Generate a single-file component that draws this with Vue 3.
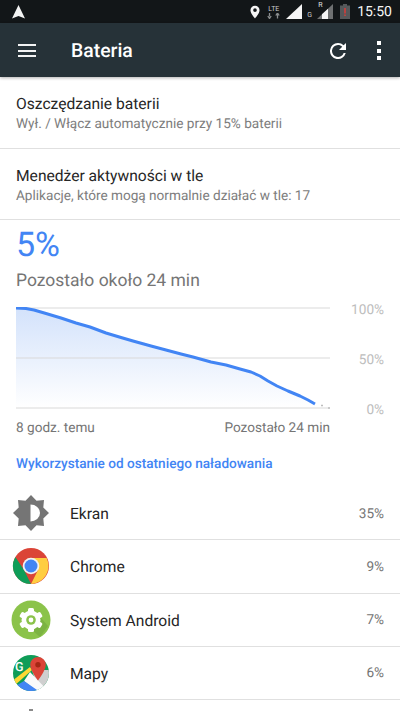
<script setup>
const usage = [
  { name: 'Ekran', pct: '35%', icon: 'screen' },
  { name: 'Chrome', pct: '9%', icon: 'chrome' },
  { name: 'System Android', pct: '7%', icon: 'android' },
  { name: 'Mapy', pct: '6%', icon: 'maps' }
];

// battery curve, read off the reference (x, y inside a 314x100 plot)
const curve = [
  [0, 0], [10, 0.5], [18, 2], [30, 5.5], [45, 10], [60, 15], [74, 19], [90, 25], [105, 29.5],
  [117, 33], [135, 38], [150, 42], [165, 46], [177, 49], [195, 54], [210, 57], [224, 61],
  [235, 64], [244, 68], [252, 73], [261, 78], [272, 83], [284, 88], [292, 92], [299, 96]
];
const linePts = curve.map(p => p.join(',')).join(' ');
const areaPts = `0,100 ${linePts} 303,100`;
</script>

<template>
  <div class="phone">
    <div class="status">
      <svg class="nav" width="13" height="14" viewBox="0 0 13 14"><path d="M6.500 0 13 13.500 6.500 11 0 13.500Z" fill="#f2f3f3"/></svg>
      <div class="status-right">
        <svg width="10" height="14" viewBox="0 0 11 14"><path d="M5.500 0a5 5 0 0 0-5 5c0 3.600 5 9 5 9s5-5.400 5-9a5 5 0 0 0-5-5Zm0 7a2 2 0 1 1 0-4 2 2 0 0 1 0 4Z" fill="#f5f5f5"/></svg>
        <div class="lte">
          <span>LTE</span>
          <svg width="14" height="6" viewBox="0 0 14 6"><path d="M2.500 0v3.500M0.800 3 2.500 5.500 4.200 3M10.500 5.500V2M8.800 2.500 10.500 0 12.200 2.500" fill="none" stroke="#8a8d8e" stroke-width="1.300"/></svg>
        </div>
        <svg class="sig" width="16" height="15" viewBox="0 0 16 15"><path d="M0 15 16 0V15Z" fill="#f5f5f5"/></svg>
        <span class="g">G</span>
        <div class="roam">
          <span>R</span>
          <svg width="16" height="15" viewBox="0 0 16 15"><path d="M0 15 16 0V15Z" fill="#6f7172"/><path d="M5 10.300 11 4.700V15H5Z" fill="#f5f5f5"/></svg>
        </div>
        <svg class="batt" width="10" height="15" viewBox="0 0 10 15"><path d="M3 0h4v1.500h3V15H0V1.500h3Z" fill="#55585a"/><path d="M4.300 4h1.400v5.500H4.300ZM4.300 10.500h1.400V12H4.300Z" fill="#e53935"/></svg>
        <span class="clock">15:50</span>
      </div>
    </div>

    <header class="toolbar">
      <div class="burger"><i></i><i></i><i></i></div>
      <h1>Bateria</h1>
      <svg class="refresh" width="16" height="16" viewBox="4 4 16 16"><path d="M17.650 6.350A7.958 7.958 0 0 0 12 4a8 8 0 1 0 7.730 10h-2.080A6 6 0 1 1 12 6c1.660 0 3.140.69 4.220 1.780L13 11h7V4l-2.350 2.350Z" fill="#fff"/></svg>
      <div class="dots"><i></i><i></i><i></i></div>
    </header>

    <section class="setting">
      <div class="title">Oszczędzanie baterii</div>
      <div class="sub">Wył. / Włącz automatycznie przy 15% baterii</div>
    </section>
    <section class="setting second">
      <div class="title">Menedżer aktywności w tle</div>
      <div class="sub">Aplikacje, które mogą normalnie działać w tle: 17</div>
    </section>

    <section class="summary">
      <div class="level">5%</div>
      <div class="remain">Pozostało około 24 min</div>
      <div class="chart-row">
        <svg class="chart" width="314" height="102" viewBox="0 -1 314 102">
          <defs>
            <linearGradient id="fade" x1="0" y1="0" x2="0" y2="1">
              <stop offset="0" stop-color="#d3e2fb"/>
              <stop offset="1" stop-color="#ffffff"/>
            </linearGradient>
          </defs>
          <polygon :points="areaPts" fill="url(#fade)"/>
          <path d="M0 0H314M0 50H314M0 100H314" stroke="#d9d9d9" stroke-width="1" fill="none"/>
          <polyline :points="linePts" fill="none" stroke="#4285f4" stroke-width="3" stroke-linejoin="round"/>
          <path d="M305 97.500h2M312 100h2" stroke="#bdbdbd" stroke-width="1.500"/>
        </svg>
        <div class="axis"><span>100%</span><span>50%</span><span>0%</span></div>
      </div>
      <div class="chart-foot">
        <span>8 godz. temu</span>
        <span>Pozostało 24 min</span>
      </div>
      <div class="since">Wykorzystanie od ostatniego naładowania</div>
    </section>

    <ul class="usage">
      <li v-for="app in usage" :key="app.name">
        <svg v-if="app.icon === 'screen'" class="icon" width="38" height="38" viewBox="0 0 38 38">
          <path d="M19 1 24.500 6.700 32 6 31.300 13.500 37 19 31.300 24.500 32 32 24.500 31.300 19 37 13.500 31.300 6 32 6.700 24.500 1 19 6.700 13.500 6 6 13.500 6.700Z" fill="#757575"/>
          <path d="M18.500 10.500a9.500 8.500 0 0 1 0 17Z" fill="#fff"/>
        </svg>
        <svg v-else-if="app.icon === 'chrome'" class="icon" width="38" height="38" viewBox="0 0 38 38">
          <circle cx="19" cy="19" r="18" fill="#db4437"/>
          <path d="M19 11H34.600A18 18 0 0 1 19 37L26 23Z" fill="#ffcd40"/>
          <path d="M3.400 10 12 23 19 37A18 18 0 0 1 3.400 10Z" fill="#0f9d58"/>
          <circle cx="19" cy="19" r="8.300" fill="#f1f1f1"/>
          <circle cx="19" cy="19" r="6.500" fill="#4285f4"/>
        </svg>
        <svg v-else-if="app.icon === 'android'" class="icon" width="40" height="40" viewBox="0 0 40 40">
          <circle cx="20" cy="20" r="19.500" fill="#8bc34a"/>
          <path d="M24 11 37 26 29 37 14 24Z" fill="#7cb342"/>
          <g fill="#fff">
            <circle cx="20" cy="20" r="9.500"/>
            <rect x="17" y="8" width="6" height="24" rx="1.500"/>
            <rect x="17" y="8" width="6" height="24" rx="1.500" transform="rotate(60 20 20)"/>
            <rect x="17" y="8" width="6" height="24" rx="1.500" transform="rotate(120 20 20)"/>
          </g>
          <circle cx="20" cy="20" r="4.800" fill="#8bc34a"/>
          <circle cx="20" cy="20" r="2.400" fill="#fff"/>
        </svg>
        <svg v-else class="icon" width="38" height="38" viewBox="0 0 38 38">
          <defs><clipPath id="disc"><circle cx="19" cy="19" r="18"/></clipPath></defs>
          <g clip-path="url(#disc)">
            <rect width="38" height="38" fill="#0f9d58"/>
            <path d="M20 16H38V38H27Z" fill="#cfcfcf"/>
            <path d="M18 18 37 38H26L12 27Z" fill="#fafafa"/>
            <path d="M12 27 28 38H0V34Z" fill="#4285f4"/>
            <path d="M0 27 18 13 20 16 2 32Z" fill="#fdd835"/>
          </g>
          <path d="M26 3a7.800 7.800 0 0 0-7.800 7.800c0 5.700 7.800 15.700 7.800 15.700s7.800-10 7.800-15.700A7.800 7.800 0 0 0 26 3Z" fill="#db4437"/>
          <circle cx="26" cy="10.800" r="2.700" fill="#a52714"/>
          <text x="3" y="17" class="g-mark">G</text>
        </svg>
        <span class="name">{{ app.name }}</span>
        <span class="pct">{{ app.pct }}</span>
      </li>
      <li class="next"><i></i></li>
    </ul>
  </div>
</template>

<style>
html, body {
  margin: 0;
  background: #fff;
}
</style>

<style scoped>
.phone {
  width: 400px;
  height: 711px;
  overflow: hidden;
  background: #fff;
  font-family: Roboto, "Liberation Sans", sans-serif;
  color: #212121;
  text-rendering: geometricPrecision;
}
.status {
  height: 23px;
  background: #121618;
  display: flex;
  align-items: center;
  justify-content: space-between;
  padding: 0 8px 0 12px;
}
.status-right {
  display: flex;
  align-items: center;
  color: #f5f5f5;
}
.lte {
  display: flex;
  flex-direction: column;
  align-items: center;
  margin-left: 6px;
  font-size: 7px;
  line-height: 8px;
  color: #c8c9ca;
  width: 15px;
}
.sig {
  margin-left: 5px;
}
.g {
  font-size: 7px;
  margin: 7px 0 0 5px;
  color: #c8c9ca;
}
.roam {
  display: flex;
  position: relative;
  margin-left: 5px;
}
.roam span {
  position: absolute;
  left: 1px;
  top: -3px;
  font-size: 7px;
  color: #e0e0e0;
}
.batt {
  margin-left: 7px;
}
.clock {
  margin-left: 7px;
  font-size: 14px;
}
.toolbar {
  height: 54px;
  background: #263238;
  display: flex;
  align-items: center;
  padding: 1px 18px 0;
  box-sizing: border-box;
  box-shadow: 0 1px 3px rgba(0, 0, 0, 0.3);
  position: relative;
  color: #fff;
}
.burger {
  width: 18px;
  display: flex;
  flex-direction: column;
  gap: 3.500px;
}
.burger i {
  height: 2px;
  background: #f2f3f3;
}
.toolbar h1 {
  margin: 0 0 0 35px;
  font-size: 19.400px;
  font-weight: 500;
  flex: 1;
}
.refresh {
  margin-right: 31px;
}
.dots {
  display: flex;
  flex-direction: column;
  gap: 3.500px;
  margin-right: 1px;
}
.dots i {
  width: 4px;
  height: 4px;
  background: #fff;
}
.setting {
  height: 72px;
  box-sizing: border-box;
  padding: 18px 16px 0;
  border-bottom: 1px solid #e0e0e0;
}
.setting.second {
  height: 71px;
}
.setting .title {
  font-size: 15.600px;
  line-height: 19px;
  color: #262626;
}
.setting .sub {
  font-size: 13.600px;
  line-height: 19px;
  margin-top: 1px;
  color: #7d7d7d;
}
.summary {
  padding: 0 16px;
}
.level {
  font-size: 34px;
  line-height: 40px;
  color: #4285f4;
  margin-top: 5px;
}
.remain {
  font-size: 17.500px;
  line-height: 22px;
  color: #757575;
  margin-top: 5px;
}
.chart-row {
  display: flex;
  margin-top: 15px;
}
.chart {
  display: block;
  flex: none;
}
.axis {
  width: 54px;
  display: flex;
  flex-direction: column;
  justify-content: space-between;
  align-items: flex-end;
  font-size: 13.600px;
  line-height: 16px;
  color: #bdbdbd;
  margin: -5px 0 -9px;
}
.chart-foot {
  width: 314px;
  display: flex;
  justify-content: space-between;
  font-size: 13.600px;
  line-height: 16px;
  color: #757575;
  margin-top: 11px;
}
.since {
  margin-top: 20px;
  font-size: 13.600px;
  font-weight: 500;
  line-height: 16px;
  color: #4285f4;
}
.usage {
  list-style: none;
  margin: 15px 0 0;
  padding: 0;
}
.usage li {
  height: 53.250px;
  box-sizing: border-box;
  display: flex;
  align-items: center;
  padding: 0 16px 0 0;
  border-bottom: 1px solid #e0e0e0;
}
.usage .icon {
  flex: none;
  margin-left: 12px;
  margin-right: 20px;
}
.usage li:nth-child(3) .icon {
  margin-left: 11px;
  margin-right: 19px;
}
.usage li.next {
  align-items: flex-start;
  border-bottom: 0;
  padding-top: 9px;
}
.next i {
  display: block;
  width: 4px;
  height: 2px;
  margin-left: 29px;
  background: #8a8a8a;
}
.name {
  flex: 1;
  font-size: 15.600px;
  padding-top: 2px;
  color: #262626;
}
.pct {
  font-size: 13.600px;
  padding-top: 1px;
  color: #757575;
}
.g-mark {
  font-size: 12.500px;
  font-weight: 500;
  fill: #fff;
  font-family: Roboto, sans-serif;
}
</style>
